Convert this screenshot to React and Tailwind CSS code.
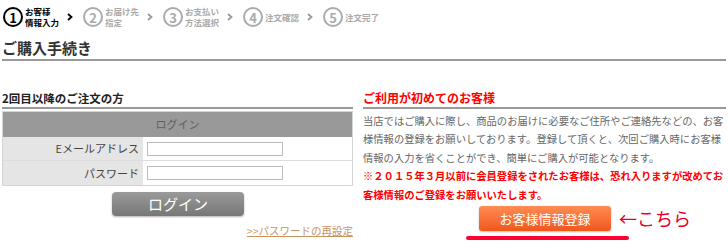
import React from "react";

const jp = { fontFamily: '"Noto Sans CJK JP", "Noto Sans", sans-serif' };

function Step({ n, lines, active }) {
  const color = active ? "text-black border-black" : "text-[#aaa] border-[#aaa]";
  return (
    <div className="flex items-center">
      <div
        className={`w-[20px] h-[20px] rounded-full border-2 flex items-center justify-center text-[13px] font-bold leading-none ${color}`}
      >
        {n}
      </div>
      <div
        className={`ml-[2px] w-[38px] text-[8.5px] leading-[11px] font-bold ${active ? "text-black" : "text-[#aaa]"}`}
      >
        {lines.map((l, i) => (
          <div key={i} className="whitespace-nowrap">
            {l}
          </div>
        ))}
      </div>
    </div>
  );
}

function Chevron({ active }) {
  return (
    <svg width="6" height="8" viewBox="0 0 6 8" className="ml-[4px] mr-[10px]">
      <path
        d="M1 1 L4.5 4 L1 7"
        fill="none"
        stroke={active ? "#000" : "#999"}
        strokeWidth="1.8"
      />
    </svg>
  );
}

export default function App() {
  return (
    <div className="w-[728px] h-[250px] bg-white overflow-hidden pl-[2px]" style={jp}>
      {/* steps */}
      <div className="h-[34px] flex items-center pl-[1px]">
        <Step n="1" lines={["お客様", "情報入力"]} active />
        <Chevron active />
        <Step n="2" lines={["お届け先", "指定"]} />
        <Chevron />
        <Step n="3" lines={["お支払い", "方法選択"]} />
        <Chevron />
        <Step n="4" lines={["注文確認"]} />
        <Chevron />
        <Step n="5" lines={["注文完了"]} />
      </div>

      {/* title */}
      <div className="w-[724px] h-[27px] border-b-2 border-[#999] pt-[2px]">
        <div className="text-[15px] leading-[23px] font-bold text-[#333]">ご購入手続き</div>
      </div>

      <div className="flex mt-[26px]">
        {/* left column */}
        <div className="w-[351px]">
          <div className="h-[22px] border-b-2 border-[#999] text-[11.5px] leading-[22px] font-bold text-[#222]">
            2回目以降のご注文の方
          </div>
          <div className="mt-[2px] border border-[#d4d4d4]">
            <div className="h-[25px] bg-[#999] flex items-center justify-center text-[11px] text-[#5f5f5f]">
              ログイン
            </div>
            <div className="flex h-[24px] border-b border-[#ddd]">
              <div className="w-[140px] bg-[#e5e5e5] flex items-center justify-end pr-[4px] text-[11px] text-[#444]">
                Eメールアドレス
              </div>
              <div className="flex-1 flex items-center pl-[4px]">
                <div className="w-[136px] h-[14px] border border-[#bbb] bg-white" />
              </div>
            </div>
            <div className="flex h-[24px]">
              <div className="w-[140px] bg-[#e5e5e5] flex items-center justify-end pr-[4px] text-[11px] text-[#444]">
                パスワード
              </div>
              <div className="flex-1 flex items-center pl-[4px]">
                <div className="w-[136px] h-[14px] border border-[#bbb] bg-white" />
              </div>
            </div>
          </div>
          <div className="mt-[6px] ml-[110px] w-[132px] h-[24px] rounded-[4px] bg-gradient-to-b from-[#9a9a9a] to-[#777] shadow-[0_1px_2px_rgba(0,0,0,0.3)] flex items-center justify-center text-white text-[15px]">
            ログイン
          </div>
          <div className="mt-[8px] text-right text-[10.5px] leading-[14px] text-[#c89460] underline">
            &gt;&gt;パスワードの再設定
          </div>
        </div>

        {/* right column */}
        <div className="w-[363px] ml-[10px]">
          <div className="h-[22px] border-b-2 border-[#999] text-[12px] leading-[22px] font-bold text-[#ff0000]">
            ご利用が初めてのお客様
          </div>
          <div className="pt-[3px] text-[10.3px] leading-[18.4px] text-[#666] whitespace-nowrap">
            <div>当店ではご購入に際し、商品のお届けに必要なご住所やご連絡先などの、お客</div>
            <div>様情報の登録をお願いしております。登録して頂くと、次回ご購入時にお客様</div>
            <div>情報の入力を省くことができ、簡単にご購入が可能となります。</div>
            <div className="font-bold text-[#ff0000]">
              ※２０１５年３月以前に会員登録をされたお客様は、恐れ入りますが改めてお
            </div>
            <div className="font-bold text-[#ff0000]">客様情報のご登録をお願いいたします。</div>
          </div>
          <div className="flex items-center mt-[2px]">
            <div className="ml-[116px] w-[132px] h-[25px] rounded-[3px] bg-gradient-to-b from-[#ff8c52] to-[#f0561a] shadow-[0_1px_2px_rgba(0,0,0,0.25)] flex items-center justify-center text-white text-[13px]">
              お客様情報登録
            </div>
            <div className="ml-[8px] text-[18px] leading-[25px] text-[#e8002c]">←こちら</div>
          </div>
          <div className="mt-[5px] ml-[103px] w-[163px] h-[4px] rounded-full bg-[#ff0033]" />
        </div>
      </div>
    </div>
  );
}
